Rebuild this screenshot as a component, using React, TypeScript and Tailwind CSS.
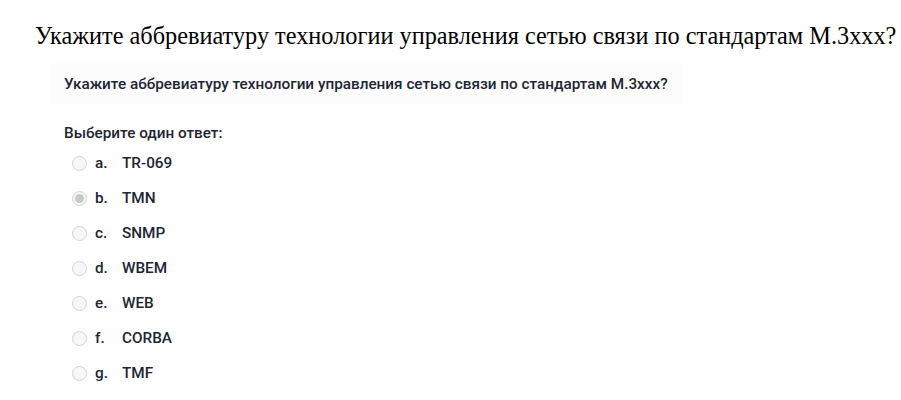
const options = [
  { letter: "a.", text: "TR-069", checked: false },
  { letter: "b.", text: "TMN", checked: true },
  { letter: "c.", text: "SNMP", checked: false },
  { letter: "d.", text: "WBEM", checked: false },
  { letter: "e.", text: "WEB", checked: false },
  { letter: "f.", text: "CORBA", checked: false },
  { letter: "g.", text: "TMF", checked: false },
];

function Radio({ checked }: { checked: boolean }) {
  return (
    <span className="flex h-[15px] w-[15px] items-center justify-center rounded-full border border-[#d2d2d2] bg-[#f7f7f7]">
      {checked && <span className="h-[9px] w-[9px] rounded-full bg-[#c8c8c8]" />}
    </span>
  );
}

export default function App() {
  return (
    <div className="h-[400px] w-[901px] bg-white">
      {/* Page heading */}
      <h1 className="pl-[35px] pt-[21px] font-['Liberation_Serif',serif] text-[24.3px] leading-[30px] text-black">
        Укажите аббревиатуру технологии управления сетью связи по стандартам M.3xxx?
      </h1>

      {/* Question screenshot */}
      <div className="ml-[50px] mt-[12px] font-['Roboto',sans-serif] text-[#1d2633]">
        <p className="w-[632px] bg-[#fcfcfc] px-[14px] pb-[10px] pt-[12px] text-[15.3px] font-medium leading-[19px]">
          Укажите аббревиатуру технологии управления сетью связи по стандартам M.3xxx?
        </p>
        <p className="mt-[20px] pl-[14px] text-[15.3px] font-medium leading-[19px]">Выберите один ответ:</p>
        <ul className="mt-[3px] pl-[22px]">
          {options.map((o) => (
            <li key={o.letter} className="flex h-[35px] items-center text-[15.3px] font-medium">
              <Radio checked={o.checked} />
              <span className="ml-[8px] w-[27px]">{o.letter}</span>
              <span>{o.text}</span>
            </li>
          ))}
        </ul>
      </div>
    </div>
  );
}
